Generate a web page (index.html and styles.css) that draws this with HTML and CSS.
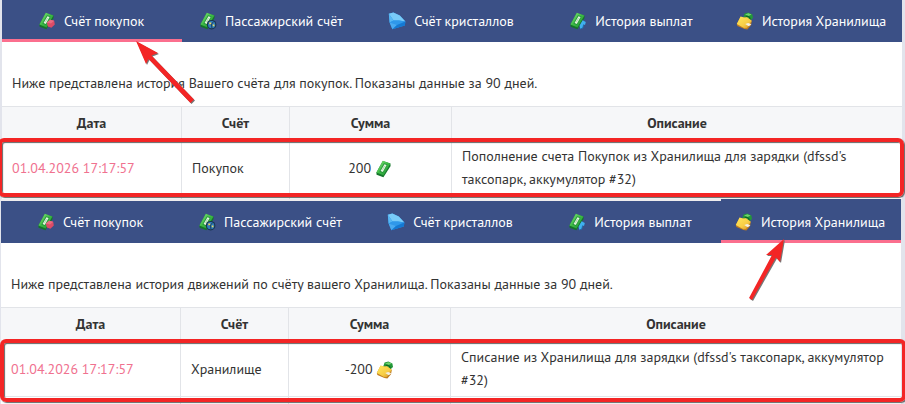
FILE: index.html
```html
<!DOCTYPE html>
<html lang="ru">
<head>
	<meta charset="utf-8">
	<title>История счетов</title>
	<link rel="stylesheet" href="styles.css">
</head>
<body>
	<svg class="sprite" aria-hidden="true">
		<defs>
			<linearGradient id="green" x1="0" y1="0" x2="1" y2="1">
				<stop offset="0" stop-color="#8dea80"></stop>
				<stop offset=".5" stop-color="#3cba45"></stop>
				<stop offset="1" stop-color="#1a8a30"></stop>
			</linearGradient>
			<linearGradient id="gold" x1="0" y1="0" x2="1" y2="1">
				<stop offset="0" stop-color="#ffe95e"></stop>
				<stop offset=".6" stop-color="#f7cd45"></stop>
				<stop offset="1" stop-color="#d08a22"></stop>
			</linearGradient>
		</defs>
		<symbol id="money" viewBox="0 0 18 18">
			<path d="M1.4 12.4 L7.8 1 L15.4 3.6 L15.6 6 L8.4 17.2 L1.6 14.8z" fill="#14742a"></path>
			<path d="M1.4 12.4 L7.8 .8 L15.4 3.6 L8.6 15.4z" fill="url(#green)"></path>
			<path d="M4.4 11.6 L9 3.2 L12.6 4.6 L7.8 13z" fill="#24923a"></path>
			<path d="M5.6 11 L9.4 4.2 L11.6 5.1 L7.8 11.9z" fill="#e4f6e0"></path>
			<path d="M7.5 9.8 L9.6 6" stroke="#8fc890" stroke-width=".7"></path>
		</symbol>
		<symbol id="shopping" viewBox="0 0 18 18">
			<use href="#money"></use>
			<path d="M8.8 10.4 L12.2 7.8 L16.2 8.8 L16.8 12.6 L13.4 15.8 L9.8 14.6z" fill="#dd4b66"></path>
			<path d="M8.8 10.4 L12.2 7.8 L16.2 8.8 L13 11.4z" fill="#ea6b80"></path>
		</symbol>
		<symbol id="passenger" viewBox="0 0 18 18">
			<use href="#money"></use>
			<circle cx="12.6" cy="12.7" r="4.8" fill="#1b3450"></circle>
			<circle cx="12.6" cy="12.7" r="3.6" fill="#2f7fbd"></circle>
			<path d="M9.4 11.2 L12.5 12.1 L14.6 9.6 M12.5 12.1 L12.9 16" fill="none" stroke="#1b3450" stroke-width=".9"></path>
			<path d="M10.2 10.6h2v1.6h-2z M13.8 12.6h1.6v1.6h-1.6z" fill="#f1d65a"></path>
		</symbol>
		<symbol id="crystal" viewBox="0 0 18 18">
			<path d="M.8 1.8 L5.4 .6 L11.8 3.4 L17.4 9.4 L16.8 13.4 L4.4 17.2 L1.6 10.4z" fill="#2b93e6"></path>
			<path d="M.8 1.8 L5.4 .6 L11.8 3.4 L17.4 9.4 L11 8.4 L5.6 8.6z" fill="#79cbf8"></path>
			<path d="M.8 1.8 L5.6 8.6 L1.6 10.4z" fill="#58b8f4"></path>
			<path d="M1.6 10.4 L5.6 8.6 L11 8.4 L17.4 9.4 L9 13z" fill="#2f98ea"></path>
			<path d="M1.6 10.4 L9 13 L4.4 17.2z" fill="#4aaaf0"></path>
			<path d="M9 13 L17.4 9.4 L16.8 13.4 L4.4 17.2z" fill="#1479d3"></path>
		</symbol>
		<symbol id="payout" viewBox="0 0 18 18">
			<use href="#money"></use>
			<path d="M11.2 17 L10.6 13.4 L13.6 8.2 L16.8 10 L16 13 L14.6 12.6 L13.8 16z" fill="#3fb0ef"></path>
			<path d="M11.2 17 L13.8 16 L14.6 12.6" fill="none" stroke="#1f6dac" stroke-width=".9"></path>
		</symbol>
		<symbol id="storage" viewBox="0 0 18 18">
			<path d="M7.2 5.6 L8.6 1.6 L12.4 .6 L16.4 2.4 L17 6 L14.6 8.2z" fill="#23973a"></path>
			<path d="M9 2.6 L12.4 1.2 L15.6 2.6 L12.6 4z" fill="#6fd46c"></path>
			<path d="M9.4 5.8 Q10 3.4 12.4 4.4 T14 7.6" fill="none" stroke="#0e5d20" stroke-width="1"></path>
			<path d="M.8 12 L4.6 4.8 L8 5.6 L11 5.4 L15.8 9 L15 13.2 L11.4 17.6 L8.4 17 L1.4 14z" fill="#c07d20"></path>
			<path d="M.8 12 L4.6 4.6 L8 5.4 L11 5.2 L15.8 8.8 L11 16 L8.4 16.2z" fill="url(#gold)"></path>
			<path d="M9.2 12 L12.2 11 L15.4 12.2 L12.8 14.2z" fill="#f2efe2"></path>
		</symbol>
	</svg>

	<main class="history">
		<section class="panel panel-shopping">
			<nav class="tabs">
				<a class="tab active" href="#"><svg class="icon"><use href="#shopping"></use></svg>Счёт покупок</a>
				<a class="tab" href="#"><svg class="icon"><use href="#passenger"></use></svg>Пассажирский счёт</a>
				<a class="tab" href="#"><svg class="icon"><use href="#crystal"></use></svg>Счёт кристаллов</a>
				<a class="tab" href="#"><svg class="icon"><use href="#payout"></use></svg>История выплат</a>
				<a class="tab" href="#"><svg class="icon"><use href="#storage"></use></svg>История Хранилища</a>
			</nav>
			<p class="intro">Ниже представлена история Вашего счёта для покупок. Показаны данные за 90 дней.</p>
			<table class="log">
				<thead>
					<tr>
						<th class="col-date">Дата</th>
						<th class="col-account">Счёт</th>
						<th class="col-sum">Сумма</th>
						<th>Описание</th>
					</tr>
				</thead>
				<tbody>
					<tr>
						<td class="date">01.04.2026 17:17:57</td>
						<td>Покупок</td>
						<td class="sum">200 <svg class="icon"><use href="#money"></use></svg></td>
						<td>Пополнение счета Покупок из Хранилища для зарядки (dfssd's таксопарк, аккумулятор #32)</td>
					</tr>
					<tr class="next"><td></td><td></td><td></td><td></td></tr>
				</tbody>
			</table>
			<div class="mark"></div>
			<svg class="arrow" viewBox="0 0 62 66">
				<path d="M2 2 L24 14 L17.5 16.5 L60 60.5 L56.5 64 L14.5 20 L12 25z"></path>
			</svg>
		</section>

		<section class="panel panel-storage">
			<nav class="tabs">
				<a class="tab" href="#"><svg class="icon"><use href="#shopping"></use></svg>Счёт покупок</a>
				<a class="tab" href="#"><svg class="icon"><use href="#passenger"></use></svg>Пассажирский счёт</a>
				<a class="tab" href="#"><svg class="icon"><use href="#crystal"></use></svg>Счёт кристаллов</a>
				<a class="tab" href="#"><svg class="icon"><use href="#payout"></use></svg>История выплат</a>
				<a class="tab active" href="#"><svg class="icon"><use href="#storage"></use></svg>История Хранилища</a>
			</nav>
			<p class="intro">Ниже представлена история движений по счёту вашего Хранилища. Показаны данные за 90 дней.</p>
			<table class="log">
				<thead>
					<tr>
						<th class="col-date">Дата</th>
						<th class="col-account">Счёт</th>
						<th class="col-sum">Сумма</th>
						<th>Описание</th>
					</tr>
				</thead>
				<tbody>
					<tr>
						<td class="date">01.04.2026 17:17:57</td>
						<td>Хранилище</td>
						<td class="sum">-200 <svg class="icon"><use href="#storage"></use></svg></td>
						<td>Списание из Хранилища для зарядки (dfssd's таксопарк, аккумулятор #32)</td>
					</tr>
					<tr class="next"><td></td><td></td><td></td><td></td></tr>
				</tbody>
			</table>
			<div class="mark"></div>
			<svg class="arrow" viewBox="0 0 40 66">
				<path d="M37 1 L33 24 L29 19.5 L5 62 L2 60 L25 17 L19 17z"></path>
			</svg>
		</section>
	</main>
</body>
</html>
```

FILE: styles.css
```css
body {margin:0; font-family:"PT Sans",Roboto,sans-serif; font-size:14px; line-height:23px; color:#333; background:#e2e4ec; overflow:hidden;}

.sprite {position:absolute; width:0; height:0;}
.icon {flex:none; width:18px; height:18px; vertical-align:middle;}

.panel {position:relative; background:#fff;}
.panel-shopping {margin:0 3px 0 2px;}
.panel-storage {margin:0 4px 0 1px;}

.tabs {display:flex; height:42px; background:#3b5086;}
.tab {display:flex; flex:1; justify-content:center; align-items:center; gap:8px; box-sizing:border-box; padding-right:2px; color:#fff; text-decoration:none; white-space:nowrap;}
.tab.active {position:relative;}
.tab.active::after {content:""; position:absolute; left:0; right:0; bottom:0; height:3px; background:#fb6f8e;}
.panel-storage .tabs {border-top:2px solid #eeecee; background-clip:padding-box;}
.panel-storage .tab.active {margin-top:-2px; padding-top:2px; background:#3b5086;}

.intro {margin:0; padding:30px 10px 11px;}

.log {width:100%; border-collapse:separate; border-spacing:0; table-layout:fixed;}
.log th, .log td {padding:5px 10px 4px; border:0 solid #e2e4e8; border-width:1px 1px 0 0;}
.log th {background:#f6f7f9; font-weight:bold;}
.log th:last-child, .log td:last-child {border-right:0;}
.log .col-date {width:20%; box-sizing:border-box;}
.log .col-account {width:12%; box-sizing:border-box;}
.log .col-sum {width:18%; box-sizing:border-box;}
.log .date {color:#f0718f;}
.log .sum {text-align:center;}
.log .next td {height:3px; padding:0;}
.panel-storage .log .next td {height:7px;}

/* red highlight drawn over the last operation */
.mark {position:absolute; box-sizing:border-box; border:4px solid #f32525; border-radius:6px; box-shadow:1px 1px 1px #666, inset 1px 1px 1px #666;}
.panel-shopping .mark {top:138px; left:-4px; right:-2px; height:59px; z-index:1;}
.panel-storage .mark {top:140px; left:-1px; right:-5px; height:63px;}

.arrow {position:absolute; fill:#f32525; filter:drop-shadow(1px 1px 0 #777);}
.panel-shopping .arrow {top:39px; left:132px; width:62px; height:66px;}
.panel-storage .arrow {top:39px; right:114px; width:40px; height:66px;}
```
